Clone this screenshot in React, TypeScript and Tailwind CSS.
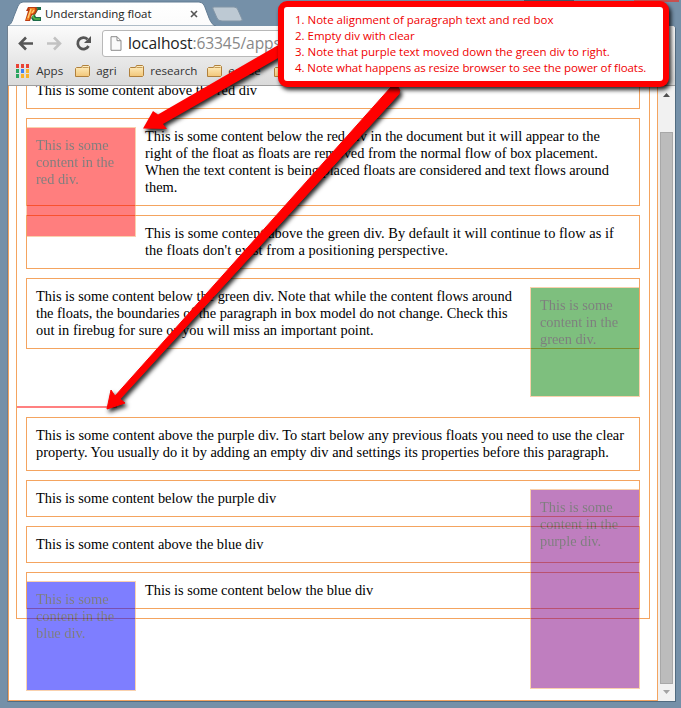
import React from "react";

const serif = "font-['Liberation_Serif',serif]";
const ui = "font-['Open_Sans','Noto_Sans',sans-serif]";

type Line = [text: string, spacing?: string];

function Lines({ lines }: { lines: Line[] }) {
  return (
    <>
      {lines.map(([text, spacing], i) => (
        <React.Fragment key={i}>
          <span className={`whitespace-nowrap ${spacing ?? ""}`}>{text}</span>
          {i < lines.length - 1 && <br />}
        </React.Fragment>
      ))}
    </>
  );
}

function Para({ lines, first = false }: { lines: Line[]; first?: boolean }) {
  return (
    <p className={`mx-[9px] mb-[9px] border border-[#f4a460] p-[9px] ${first ? "mt-0" : "mt-[9px]"}`}>
      <Lines lines={lines} />
    </p>
  );
}

function FloatBox({ className, lines }: { className: string; lines: Line[] }) {
  return (
    <div className={`m-[9px] w-[110px] border border-[#f4a460] p-[9px] opacity-50 ${className}`}>
      <Lines lines={lines} />
    </div>
  );
}

function Folder({ label, className = "" }: { label: string; className?: string }) {
  return (
    <div className={`flex items-center gap-[5px] ${className}`}>
      <svg width="16" height="14" viewBox="0 0 16 14" className="shrink-0">
        <defs>
          <linearGradient id="folder" x1="0" y1="0" x2="0" y2="1">
            <stop offset="0" stopColor="#fff0c4" />
            <stop offset="1" stopColor="#f2c678" />
          </linearGradient>
        </defs>
        <path d="M.5 12.500V4.500L1.500 3.500H6.500L7.500 1.500H13.500L14.500 2.500V11.500L13.500 12.500Z" fill="url(#folder)" stroke="#b0803c" />
        <path d="M7.500 3.500H13.500" stroke="#c79d5a" />
      </svg>
      <span className="whitespace-nowrap">{label}</span>
    </div>
  );
}

const appColors = [
  "bg-[#ea4335]", "bg-[#ea4335]", "bg-[#ea4335]",
  "bg-[#2ba560]", "bg-[#3b82f6]", "bg-[#f9b32b]",
  "bg-[#2ba560]", "bg-[#f9b32b]", "bg-[#f9b32b]",
];

function TabStrip() {
  return (
    <div className="relative flex h-[26px] shrink-0">
      <svg width="250" height="26" className="absolute left-0 top-0">
        <defs>
          <linearGradient id="tab" x1="0" y1="0" x2="0" y2="1">
            <stop offset="0" stopColor="#ffffff" />
            <stop offset="1" stopColor="#fbfbfb" />
          </linearGradient>
        </defs>
        <path d="M7 26C11 25 12 22 14 16L18 6Q19.500 2 23 2H199Q203 2 204.500 6L209 18Q212 25.500 216 26Z" fill="url(#tab)" stroke="#627c93" strokeWidth="1" />
        <path d="M214 7H234Q237 7 238 10L242 19Q243 21 240 21H222Q218 21 217 18L213 9Q212 7 214 7Z" fill="#bdc9d3" stroke="#8295a6" />
      </svg>
      <div className="relative flex h-[26px] w-[210px] items-center pl-[25px] pt-[2px]">
        <svg width="17" height="17" viewBox="0 0 17 17" className="shrink-0">
          <path d="M10 1H16V4H13L10 9L11 11H16V15H8L6 12L9 8Z" fill="#1c6a48" />
          <path d="M12 2L9 8L8 11L10 13H15" fill="none" stroke="#57b947" strokeWidth="1.600" />
          <path d="M3 1H10Q13 1 12 4L11 7Q10 9 7 9L5 15H0L3 5H1Z" fill="#b93a12" />
          <path d="M4 2H9Q11 2 10 5Q9 8 6 8L4 14H1L5 3Z" fill="#f58220" />
          <path d="M6 3L3 12M7 7L9 4" fill="none" stroke="#ffd27b" strokeWidth="1.200" />
        </svg>
        <span className="ml-[3px] whitespace-nowrap text-[11.5px] leading-4 tracking-[-0.03px] text-[#222]">Understanding float</span>
        <svg width="8" height="8" viewBox="0 0 8 8" className="absolute left-[190px] top-[10px]">
          <path d="M1 1L7 7M7 1L1 7" stroke="#555" strokeWidth="1.600" />
        </svg>
      </div>
      <div className="absolute left-[524px] top-0 h-px w-[50px] bg-[#46596b]" />
      <div className="absolute left-[634px] top-0 h-[2px] w-[45px] bg-[#c75050]" />
    </div>
  );
}

function Toolbar() {
  return (
    <div className="flex h-[60px] flex-col rounded-tr-[3px] border-b border-[#9d9d9d] bg-linear-to-b from-[#fbfbfb] to-[#dadada]">
      <div className="flex h-[35px] items-center">
        <svg width="94" height="35" viewBox="0 0 94 35" className="shrink-0">
          <path d="M25 17.500H13M18 11.500L12 17.500L18 23.500" fill="none" stroke="#555" strokeWidth="2.600" />
          <path d="M39 17.500H51M46 11.500L52 17.500L46 23.500" fill="none" stroke="#c2c2c2" strokeWidth="2.600" />
          <path d="M80.500 20A5.700 5.700 0 1 1 79.500 13.300" fill="none" stroke="#555" strokeWidth="2.800" />
          <path d="M83 10V17H76Z" fill="#555" />
        </svg>
        <div className="flex h-[27px] flex-1 items-center rounded-[3px] border border-[#b8b8b8] bg-white pl-[7px]">
          <svg width="12" height="15" viewBox="0 0 12 15" className="shrink-0">
            <path d="M1 .7H7L11 4.700V14.300H1ZM7 .7V4.700H11" fill="#fafafa" stroke="#8b8b8b" />
          </svg>
          <span className="ml-[6px] whitespace-nowrap text-[15.6px] tracking-[-0.1px] text-[#888]">
            <span className="text-[#222]">localhost</span>:63345/apps
          </span>
        </div>
        <div className="w-[24px]" />
      </div>
      <div className="flex h-[20px] items-center pl-[8px] text-[11.6px] text-[#333]">
        <div className="grid grid-cols-3 gap-[1.5px]">
          {appColors.map((c, i) => <i key={i} className={`size-[3.4px] ${c}`} />)}
        </div>
        <span className="ml-[7px] w-[39px] whitespace-nowrap">Apps</span>
        <Folder label="agri" className="w-[54px]" />
        <Folder label="research" className="w-[78px]" />
        <Folder label="ecode" className="w-[67px]" />
        <Folder label="" />
      </div>
    </div>
  );
}

function Page() {
  return (
    <div className={`h-[615px] w-[650px] overflow-hidden border-x border-b border-[#f4a460] bg-white pl-[7px] text-[14.4px] leading-[17px] tracking-[-0.02px] text-black ${serif}`}>
      <div className="-mt-[40px] h-[573px] w-[634px] border border-[#f4a460] pt-[25px]">
        <Para first lines={[["This is some content above the red div"]]} />
        <FloatBox className="float-left h-[110px] bg-[#ff0000]" lines={[["This is some"], ["content in the"], ["red div."]]} />
        <Para lines={[
          ["This is some content below the red div in the document but it will appear to the"],
          ["right of the float as floats are removed from the normal flow of box placement."],
          ["When the text content is being placed floats are considered and text flows around", "tracking-[-0.05px]"],
          ["them."],
        ]} />
        <Para lines={[
          ["This is some content above the green div. By default it will continue to flow as if", "tracking-[0.04px]"],
          ["the floats don't exist from a positioning perspective.", "tracking-[0.09px]"],
        ]} />
        <FloatBox className="float-right h-[110px] bg-[#008000]" lines={[["This is some"], ["content in the"], ["green div."]]} />
        <Para lines={[
          ["This is some content below the green div. Note that while the content flows around"],
          ["the floats, the boundaries of the paragraph in box model do not change. Check this", "tracking-[-0.04px]"],
          ["out in firebug for sure or you will miss an important point.", "tracking-[0.02px]"],
        ]} />
        <div className="clear-both h-[2px] w-[100px] bg-[#ff8080]" />
        <Para lines={[
          ["This is some content above the purple div. To start below any previous floats you need to use the clear", "tracking-[0.003px]"],
          ["property. You usually do it by adding an empty div and settings its properties before this paragraph.", "tracking-[0.01px]"],
        ]} />
        <FloatBox className="float-right h-[200px] bg-[#800080]" lines={[["This is some"], ["content in the"], ["purple div."]]} />
        <Para lines={[["This is some content below the purple div"]]} />
        <Para lines={[["This is some content above the blue div"]]} />
        <FloatBox className="float-left h-[110px] bg-[#0000ff]" lines={[["This is some"], ["content in the"], ["blue div."]]} />
        <Para lines={[["This is some content below the blue div"]]} />
      </div>
    </div>
  );
}

function Scrollbar() {
  return (
    <div className="flex h-[615px] w-[17px] flex-col items-center bg-[#f1f1f1] pr-px">
      <svg width="7" height="4" className="mt-[7px] shrink-0"><path d="M0 4L3.500 0L7 4Z" fill="#505050" /></svg>
      <div className="mt-[35px] h-[552px] w-[13px] shrink-0 border border-[#a8a8a8] bg-[#bcbcbc]" />
      <svg width="7" height="4" className="mt-[6px] shrink-0"><path d="M0 0L3.500 4L7 0Z" fill="#a3a3a3" /></svg>
    </div>
  );
}

function Annotations() {
  return (
    <>
      <svg width="681" height="708" className="pointer-events-none absolute left-0 top-0 drop-shadow-[2px_3px_2px_rgba(0,0,0,0.85)]">
        <path d="M281 43.500L158 114.500L153 111L143 128.500L167 129L163 124L287 53Z" fill="#f00" />
        <path d="M391 87L115 396L111 390L107 409L125 403L120 399L399 94Q401 90 398 87Z" fill="#f00" stroke="#f00" strokeLinejoin="round" />
      </svg>
      <div className="absolute left-[278px] top-[1px] h-[86px] w-[391px] rounded-[9px] border-6 border-[#f00] bg-white pl-[11px] pt-[5px] text-[11.5px] leading-[16px] tracking-[-0.02px] text-[#f00000] shadow-[2px_3px_4px_rgba(0,0,0,0.85)]">
        <Lines lines={[
          ["1. Note alignment of paragraph text and red box"],
          ["2. Empty div with clear"],
          ["3. Note that purple text moved down the green div to right."],
          ["4. Note what happens as resize browser to see the power of floats.", "tracking-[-0.08px]"],
        ]} />
      </div>
    </>
  );
}

export default function App() {
  return (
    <div className={`relative flex h-[708px] w-[681px] flex-col overflow-hidden bg-[#7590a8] ${ui}`}>
      <TabStrip />
      <div className="ml-[7px] w-[669px] rounded-tr-[3px] border-b border-l border-r border-b-[#516b80] border-l-[#708090] border-r-[#516b80] bg-[#f1f1f1]">
        <Toolbar />
        <div className="flex h-[615px]">
          <Page />
          <Scrollbar />
        </div>
      </div>
      <Annotations />
    </div>
  );
}
